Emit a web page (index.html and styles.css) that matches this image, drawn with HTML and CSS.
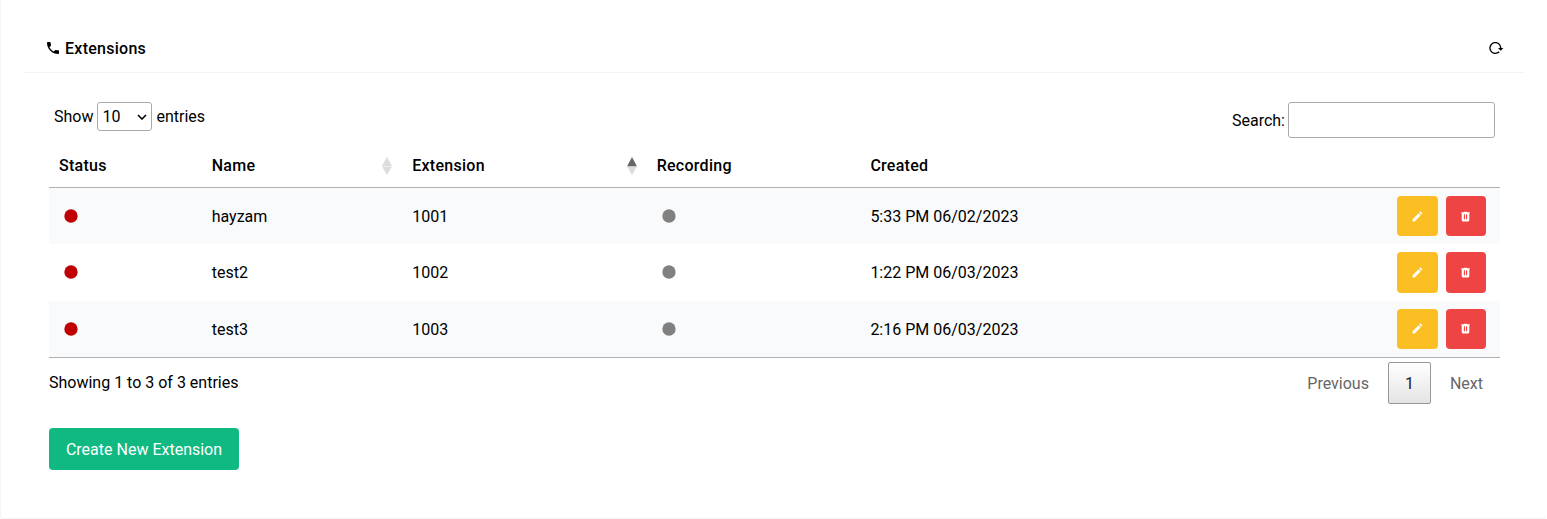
FILE: index.html
```
<!DOCTYPE html>
<html lang="en">
<head>
<meta charset="utf-8">
<title>Extensions</title>
<link rel="stylesheet" href="styles.css">
</head>
<body>
<svg class="sprite" width="0" height="0">
  <symbol id="phone" viewBox="0 0 24 24"><path d="M6.62,10.79C8.06,13.62 10.38,15.94 13.21,17.38L15.41,15.18C15.69,14.9 16.08,14.82 16.43,14.93C17.55,15.3 18.75,15.5 20,15.5A1,1 0 0,1 21,16.5V20A1,1 0 0,1 20,21A17,17 0 0,1 3,4A1,1 0 0,1 4,3H7.5A1,1 0 0,1 8.5,4C8.5,5.25 8.7,6.45 9.07,7.57C9.18,7.92 9.1,8.31 8.82,8.59L6.62,10.79Z"/></symbol>
  <symbol id="reload" viewBox="0 0 24 24"><path d="M2 12C2 16.97 6.03 21 11 21C13.39 21 15.68 20.06 17.4 18.4L15.9 16.9C14.63 18.25 12.86 19 11 19C4.76 19 1.64 11.46 6.05 7.05C10.46 2.64 18 5.77 18 12H15L19 16H19.1L23 12H20C20 7.03 15.97 3 11 3C6.03 3 2 7.03 2 12Z"/></symbol>
  <symbol id="pencil" viewBox="0 0 24 24"><path d="M20.71,7.04C21.1,6.65 21.1,6 20.71,5.63L18.37,3.29C18,2.9 17.35,2.9 16.96,3.29L15.12,5.12L18.87,8.87M3,17.25V21H6.75L17.81,9.93L14.06,6.18L3,17.25Z"/></symbol>
  <symbol id="trash" viewBox="0 0 24 24"><path d="M9,3V4H4V6H5V19A2,2 0 0,0 7,21H17A2,2 0 0,0 19,19V6H20V4H15V3H9M9,8H11V17H9V8M13,8H15V17H13V8Z"/></symbol>
  <symbol id="circle" viewBox="0 0 24 24"><circle cx="12" cy="12" r="10"/></symbol>
</svg>
<main class="card">
  <header class="card-header">
    <h1 class="title"><svg class="icon"><use href="#phone"/></svg><span>Extensions</span></h1>
    <svg class="icon reload"><use href="#reload"/></svg>
  </header>
  <section class="content">
    <div class="toolbar">
      <div class="length">Show <span class="select">10<svg class="chevron" viewBox="0 0 10 6"><path d="M1 1l4 4 4-4"/></svg></span> entries</div>
      <label class="search"><span>Search:</span> <input class="search-input" type="text"></label>
    </div>
    <div class="table">
      <div class="row head">
        <div>Status</div>
        <div class="sortable">Name<svg class="sort" viewBox="0 0 10 18"><path class="off" d="M5 0l5 9H0z"/><path class="off" d="M0 9.5h10L5 18z"/></svg></div>
        <div class="sortable">Extension<svg class="sort" viewBox="0 0 10 18"><path class="on" d="M5 0l5 9.5H0z"/><path class="off" d="M0 9.5h10L5 18z"/></svg></div>
        <div>Recording</div><div>Created</div><div></div>
      </div>
      <div class="row odd">
        <div><svg class="icon dot red"><use href="#circle"/></svg></div><div class="text">hayzam</div><div class="text">1001</div><div><svg class="icon dot gray"><use href="#circle"/></svg></div><div class="text">5:33 PM 06/02/2023</div>
        <div class="actions"><button class="btn edit"><svg class="small"><use href="#pencil"/></svg></button><button class="btn delete"><svg class="small"><use href="#trash"/></svg></button></div>
      </div>
      <div class="row">
        <div><svg class="icon dot red"><use href="#circle"/></svg></div><div class="text">test2</div><div class="text">1002</div><div><svg class="icon dot gray"><use href="#circle"/></svg></div><div class="text">1:22 PM 06/03/2023</div>
        <div class="actions"><button class="btn edit"><svg class="small"><use href="#pencil"/></svg></button><button class="btn delete"><svg class="small"><use href="#trash"/></svg></button></div>
      </div>
      <div class="row odd">
        <div><svg class="icon dot red"><use href="#circle"/></svg></div><div class="text">test3</div><div class="text">1003</div><div><svg class="icon dot gray"><use href="#circle"/></svg></div><div class="text">2:16 PM 06/03/2023</div>
        <div class="actions"><button class="btn edit"><svg class="small"><use href="#pencil"/></svg></button><button class="btn delete"><svg class="small"><use href="#trash"/></svg></button></div>
      </div>
    </div>
    <div class="footer">
      <div class="info">Showing 1 to 3 of 3 entries</div>
      <nav class="pages"><span class="page">Previous</span><span class="page current">1</span><span class="page">Next</span></nav>
    </div>
    <button class="create">Create New Extension</button>
  </section>
</main>
</body>
</html>
```
FILE: styles.css
```
* { box-sizing: border-box; }
body { margin: 0; background: #fff; color: #000; font: 16px/24px Roboto, sans-serif; overflow: hidden; }
.sprite { display: none; }
.card { height: 519px; padding: 24px 23px; border: 1px solid #f3f4f6; border-top: 0; border-right-color: #fff; border-radius: 0 0 4px 4px; }
.card-header { display: flex; align-items: center; justify-content: space-between; height: 49px; margin-right: -1px; padding: 0 20px 0 21px; border-bottom: 1px solid #f3f4f6; }
.title { display: flex; align-items: center; gap: 4px; margin: 0; font-size: 16px; font-weight: 500; line-height: 24px; letter-spacing: .27px; }
.title span, .search span { padding-top: 2px; }
.icon { width: 16px; height: 16px; fill: currentColor; flex: none; }
.content { padding: 29px 23px 0 25px; }
.toolbar { display: flex; justify-content: space-between; align-items: flex-start; height: 42px; padding: 0 5px; }
.length { display: flex; align-items: center; height: 29px; gap: 4px; }
.select { display: flex; align-items: center; justify-content: space-between; width: 55px; height: 29px; padding: 0 4px; border: 1px solid #aaa; border-radius: 3px; }
.chevron { width: 10px; height: 6px; fill: none; stroke: #000; stroke-width: 1.6; }
.search { display: flex; align-items: center; gap: 3px; }
.search-input { width: 207px; height: 36px; padding: 5px; border: 1px solid #aaa; border-radius: 3px; background: transparent; }
.table { border-bottom: 1px solid #b0b0b0; }
.row { display: grid; grid-template-columns: 152.7px 200.5px 244.5px 213.7px 1fr 121px; align-items: center; height: 56.5px; }
.row > div { padding-left: 10px; }
.row > .text { padding-top: 2px; }
.head { height: 44px; font-weight: 500; letter-spacing: .27px; border-bottom: 1px solid #b0b0b0; }
.head + .row { height: 56px; }
.odd { background: #f9fafb; }
.sortable { display: flex; align-items: center; justify-content: space-between; padding-right: 10px; }
.sort { width: 10px; height: 18px; }
.off { fill: #dcdcdc; }
.on { fill: #666; }
.dot { display: block; margin-left: 4px; }
.red { color: #c00000; }
.gray { color: #808080; }
.row > .actions { display: flex; gap: 8px; padding-left: 18px; }
.btn { display: flex; align-items: center; justify-content: center; width: 40.5px; height: 40.5px; padding: 0; border: 0; border-radius: 4px; color: #fff; }
.edit { background: #fbbf24; }
.delete { background: #ef4444; }
.small { width: 13px; height: 13px; fill: currentColor; }
.footer { display: flex; justify-content: space-between; height: 70px; padding-top: 4px; }
.info { padding-top: 9px; }
.pages { display: flex; align-items: flex-start; gap: 2px; }
.page { padding: 9px 16px 7px; border: 1px solid transparent; border-radius: 2px; color: #666; }
.current { color: #222; border-color: #979797; background: linear-gradient(#fff, #e4e4e4); }
.create { display: block; width: 190px; height: 42px; padding: 2px 0 0; border: 0; border-radius: 4px; background: #10b981; color: #fff; font: inherit; }
```
